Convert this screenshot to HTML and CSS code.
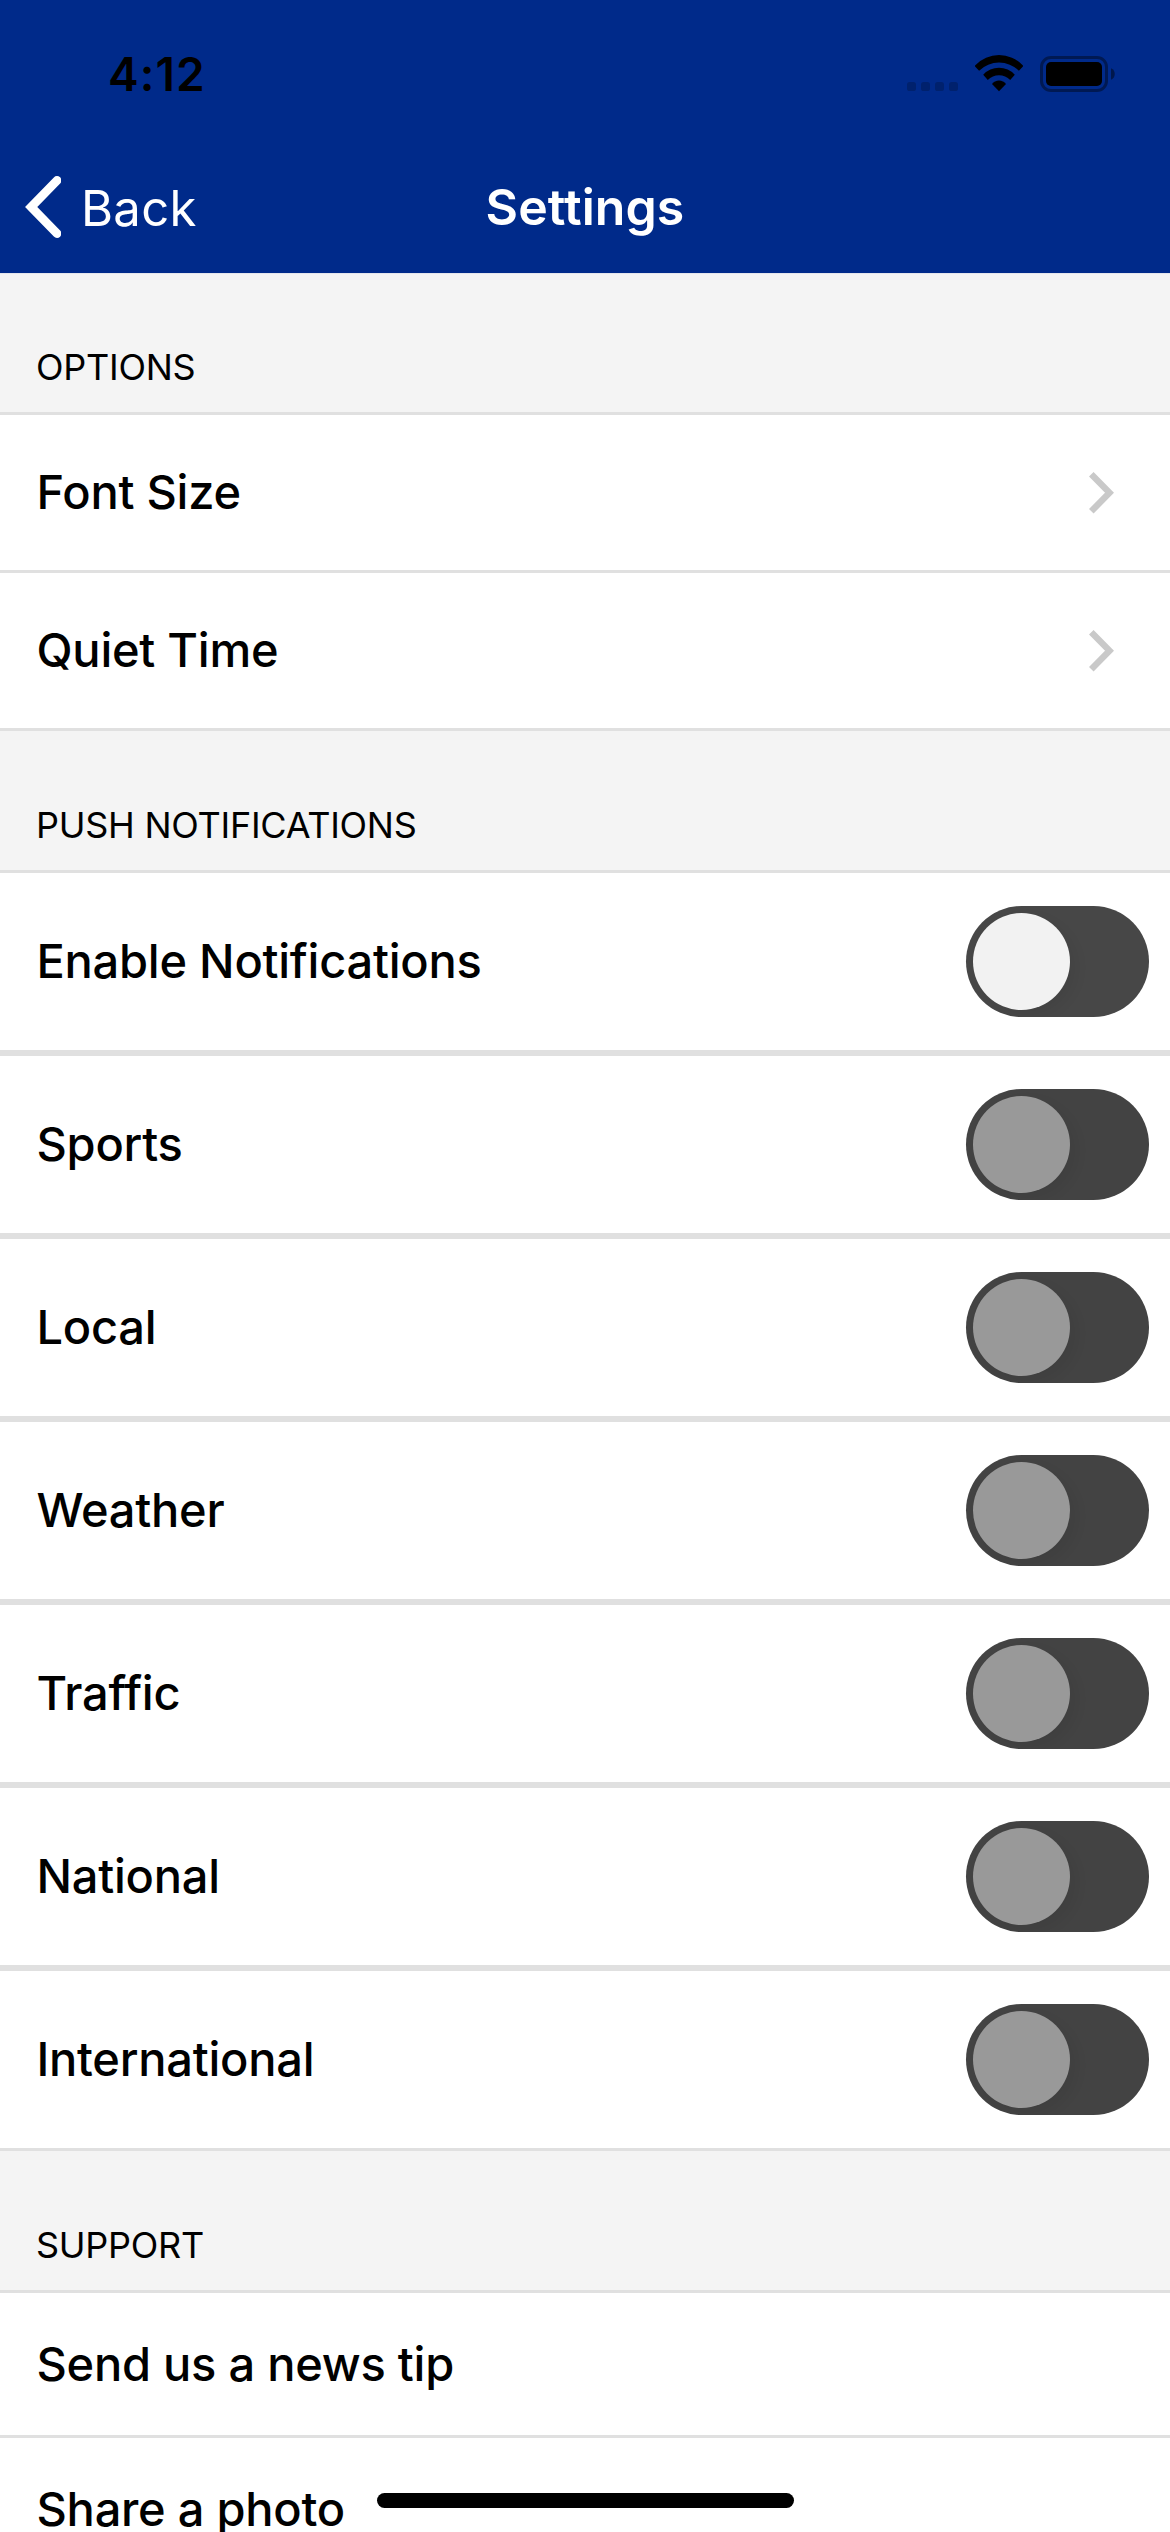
FILE: index.html
```html
<!DOCTYPE html>
<html lang="en">
<head>
<meta charset="utf-8">
<title>Settings</title>
<link rel="stylesheet" href="styles.css">
</head>
<body>
<div class="screen">
  <header class="header">
    <div class="status-bar">
      <span class="time">4:12</span>
      <div class="status-icons">
        <svg class="signal" width="51" height="37" viewBox="0 0 51 37">
          <rect x="0" y="27" width="9" height="9" rx="2.6"/>
          <rect x="14" y="27" width="9" height="9" rx="2.6"/>
          <rect x="28" y="27" width="9" height="9" rx="2.6"/>
          <rect x="42" y="27" width="9" height="9" rx="2.6"/>
        </svg>
        <svg width="48" height="37" viewBox="0 0 48 37">
          <path d="M.3 10.3A32.6 32.6 0 0 1 47.7 10.3Q48.4 11 47.7 11.7L43.9 15.7A28.5 28.5 0 0 0 4.1 15.7L.3 11.7Q-.4 11 .3 10.3Z"/>
          <path d="M8.2 19.7A21.4 21.4 0 0 1 39.8 19.7L35.2 25A15.6 15.6 0 0 0 12.8 25Z"/>
          <path d="M17 29A8.8 8.8 0 0 1 31 29L24 36.3Z"/>
        </svg>
        <svg width="75" height="37" viewBox="0 0 75 37">
          <rect x="1.5" y="2.5" width="65" height="33" rx="9.5" fill="none" stroke="#000" stroke-width="3" opacity=".4"/>
          <rect x="6" y="7" width="56" height="24" rx="5"/>
          <path d="M71 13.3C76 15 76 23 71 24.7Z" opacity=".45"/>
        </svg>
      </div>
    </div>
    <nav class="nav-bar">
      <a class="back">
        <svg width="36" height="62" viewBox="0 0 36 62"><path d="M32 4.5L6.2 31L32 57.5" fill="none" stroke="#fff" stroke-width="8.8" stroke-linecap="round"/></svg>
        <span class="back-label">Back</span>
      </a>
      <h1 class="title">Settings</h1>
    </nav>
  </header>

  <main>
    <h2 class="section-title section-title-first">OPTIONS</h2>
    <ul class="list options">
      <li class="row"><span class="label">Font Size</span>
        <svg class="chevron" width="25" height="42" viewBox="0 0 25 42"><path d="M2.3 2.3L20.5 20.8L2.3 39.3" fill="none" stroke="#c9c9c9" stroke-width="6.4"/></svg></li>
      <li class="row"><span class="label">Quiet Time</span>
        <svg class="chevron" width="25" height="42" viewBox="0 0 25 42"><path d="M2.3 2.3L20.5 20.8L2.3 39.3" fill="none" stroke="#c9c9c9" stroke-width="6.4"/></svg></li>
    </ul>

    <h2 class="section-title">PUSH NOTIFICATIONS</h2>
    <ul class="list toggles">
      <li class="row"><span class="label">Enable Notifications</span><span class="toggle"><span class="knob"></span></span></li>
      <li class="row"><span class="label">Sports</span><span class="toggle disabled"><span class="knob"></span></span></li>
      <li class="row"><span class="label">Local</span><span class="toggle disabled"><span class="knob"></span></span></li>
      <li class="row"><span class="label">Weather</span><span class="toggle disabled"><span class="knob"></span></span></li>
      <li class="row"><span class="label">Traffic</span><span class="toggle disabled"><span class="knob"></span></span></li>
      <li class="row"><span class="label">National</span><span class="toggle disabled"><span class="knob"></span></span></li>
      <li class="row"><span class="label">International</span><span class="toggle disabled"><span class="knob"></span></span></li>
    </ul>

    <h2 class="section-title">SUPPORT</h2>
    <ul class="list support">
      <li class="row"><span class="label">Send us a news tip</span></li>
      <li class="row"><span class="label">Share a photo</span></li>
    </ul>
  </main>
  <div class="home-indicator"></div>
</div>
</body>
</html>
```
FILE: styles.css
```css
* {
  box-sizing: border-box;
}

body {
  margin: 0;
  background: #fff;
  color: #000;
  font-family: Inter, "Liberation Sans", sans-serif;
}

.screen {
  position: relative;
  width: 1170px;
  height: 2532px;
  overflow: hidden;
}

/* Header */
.header {
  height: 273px;
  background: #002a8a;
}

.status-bar {
  display: flex;
  justify-content: space-between;
  align-items: flex-start;
  height: 141px;
  padding: 46px 55px 0 108px;
}

.time {
  font-size: 46px;
  font-weight: 600;
  line-height: 56px;
  letter-spacing: 1.1px;
}

.status-icons {
  display: flex;
  gap: 17px;
  margin-top: 9px;
}

.signal {
  opacity: .2;
}

.nav-bar {
  display: grid;
  grid-template-columns: 1fr auto 1fr;
  align-items: center;
  height: 132px;
  color: #fff;
}

.back {
  display: flex;
  align-items: center;
  gap: 20px;
  padding-left: 25px;
}

.back-label {
  margin-top: 3px;
  font-size: 49px;
  line-height: 59px;
  letter-spacing: .28px;
}

.title {
  margin: 0;
  font-size: 50px;
  font-weight: 600;
  line-height: 60px;
  letter-spacing: .07px;
  font-variant-ligatures: none;
}

/* Sections */
.section-title {
  display: flex;
  align-items: flex-end;
  height: 142px;
  margin: 0;
  padding: 0 36px 23px;
  border-bottom: 3px solid #e0e0e0;
  background: #f4f4f4;
  font-size: 36px;
  font-weight: 400;
  line-height: 44px;
  letter-spacing: -.26px;
}

.section-title-first {
  border-top: 1px solid #e4e5ec;
}

.list {
  margin: 0;
  padding: 0;
  list-style: none;
}

.row {
  display: flex;
  justify-content: space-between;
  align-items: center;
  padding-left: 36.5px;
  border-bottom: 3px solid #e0e0e0;
}

.label {
  margin-bottom: 2px;
  font-size: 47px;
  font-weight: 500;
  line-height: 57px;
  letter-spacing: -.25px;
}

.options .row {
  height: 158px;
  padding-right: 56px;
}

.toggles .row {
  height: 183px;
  padding-right: 21px;
  border-bottom-width: 6px;
}

.toggles .row:last-child {
  height: 180px;
  border-bottom-width: 3px;
}

.support .row {
  height: 145px;
}

.support .label {
  margin-bottom: 1px;
}

/* Toggle switch */
.toggle {
  display: flex;
  align-items: center;
  width: 183px;
  height: 111px;
  padding-left: 7px;
  border-radius: 56px;
  background: #474747;
  overflow: hidden;
}

.knob {
  width: 97px;
  height: 97px;
  border-radius: 50%;
  background: #f2f2f2;
  box-shadow: 6px 6px 14px rgba(0, 0, 0, .06);
}

.disabled {
  background: #434343;
}

.disabled .knob {
  background: #999;
}

.home-indicator {
  position: absolute;
  left: 377px;
  bottom: 24px;
  width: 417px;
  height: 15px;
  border-radius: 8px;
  background: #000;
}
```
